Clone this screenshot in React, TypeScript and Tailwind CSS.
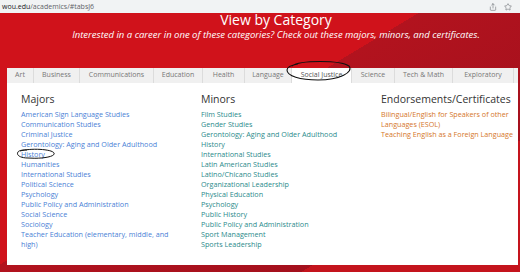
import React from 'react';
import { Share, Star } from 'lucide-react';

const tabs = [
  { label: 'Art', w: 'w-[27px]' },
  { label: 'Business', w: 'w-[46px]' },
  { label: 'Communications', w: 'w-[74px]' },
  { label: 'Education', w: 'w-[49px]' },
  { label: 'Health', w: 'w-[42px]' },
  { label: 'Language', w: 'w-[47px]' },
  { label: 'Social Justice', w: 'w-[60px]' },
  { label: 'Science', w: 'w-[43px]' },
  { label: 'Tech & Math', w: 'w-[58px]' },
  { label: 'Exploratory', w: 'w-[61px]' },
];

const majors = [
  'American Sign Language Studies',
  'Communication Studies',
  'Criminal Justice',
  'Gerontology: Aging and Older Adulthood',
  'History',
  'Humanities',
  'International Studies',
  'Political Science',
  'Psychology',
  'Public Policy and Administration',
  'Social Science',
  'Sociology',
  'Teacher Education (elementary, middle, and high)',
];

const minors = [
  'Film Studies',
  'Gender Studies',
  'Gerontology: Aging and Older Adulthood',
  'History',
  'International Studies',
  'Latin American Studies',
  'Latino/Chicano Studies',
  'Organizational Leadership',
  'Physical Education',
  'Psychology',
  'Public History',
  'Public Policy and Administration',
  'Sport Management',
  'Sports Leadership',
];

const certificates = [
  'Bilingual/English for Speakers of other Languages (ESOL)',
  'Teaching English as a Foreign Language',
];

const Column: React.FC<{ title: string; items: string[]; color: string; width: string }> = ({
  title,
  items,
  color,
  width,
}) => (
  <div className={width}>
    <h3 className="text-[10.5px] leading-[12px] text-[#333]">{title}</h3>
    <ul className="mt-[4px]">
      {items.map((item) => (
        <li key={item} className={`text-[7.2px] leading-[10px] ${color}`}>
          {item}
        </li>
      ))}
    </ul>
  </div>
);

const App: React.FC = () => {
  return (
    <div className="relative h-[272px] w-[520px] overflow-hidden font-['Open_Sans',sans-serif]">
      <div className="flex h-[13px] items-center justify-between bg-[#f1f3f4] pl-[2px] pr-[8px]">
        <p className="text-[7px] leading-none text-[#5f6368]">
          <span className="text-[#202124]">wou.edu</span>/academics/#tabsJ6
        </p>
        <div className="flex items-center gap-[7px] text-[#5f6368]">
          <Share size={8} strokeWidth={1.6} />
          <Star size={8} strokeWidth={1.6} />
        </div>
      </div>

      <div className="h-[259px] bg-[linear-gradient(149deg,#d0121b_44%,#b2131e_44%,#a4101d_77%,#c4141d_77%)]">
        <div className="pl-[32px] text-center text-white">
          <h1 className="text-[14px] leading-[14px]">View by Category</h1>
          <p className="mt-[3px] text-[9.5px] leading-[10px] italic">
            Interested in a career in one of these categories? Check out these majors, minors, and certificates.
          </p>
        </div>

        <div className="ml-[7px] mt-[28px] h-[197px] w-[511px] bg-white">
          <div className="flex h-[15px] bg-[#f0f0f0]">
            {tabs.map((tab) => (
              <div
                key={tab.label}
                className={`flex shrink-0 items-center justify-center whitespace-nowrap border-r border-[#dcdcdc] text-[7px] ${tab.w} ${
                  tab.label === 'Social Justice' ? 'bg-white text-[#555]' : 'text-[#777]'
                }`}
              >
                {tab.label}
              </div>
            ))}
          </div>

          <div className="flex pl-[14px] pt-[10px]">
            <Column title="Majors" items={majors} color="text-[#4a7fd6]" width="w-[180px] pr-[30px]" />
            <Column title="Minors" items={minors} color="text-[#2b8b8c]" width="w-[180px]" />
            <Column
              title="Endorsements/Certificates"
              items={certificates}
              color="text-[#d5762a]"
              width="w-[132px]"
            />
          </div>
        </div>
      </div>

      <svg className="pointer-events-none absolute inset-0" width="520" height="272" fill="none">
        <path
          d="M292 66 C300 60 340 60 349 66 C354 72 340 80 318 80 C300 80 287 76 287 70 C287 67 292 65 298 64"
          stroke="#111"
          strokeWidth="1.1"
        />
        <path
          d="M20 151 C30 148 52 149 54 153 C56 157 40 159 28 158 C20 158 16 155 18 152 C19 150 24 150 27 150"
          stroke="#111"
          strokeWidth="1"
        />
      </svg>
    </div>
  );
};

export default App;
